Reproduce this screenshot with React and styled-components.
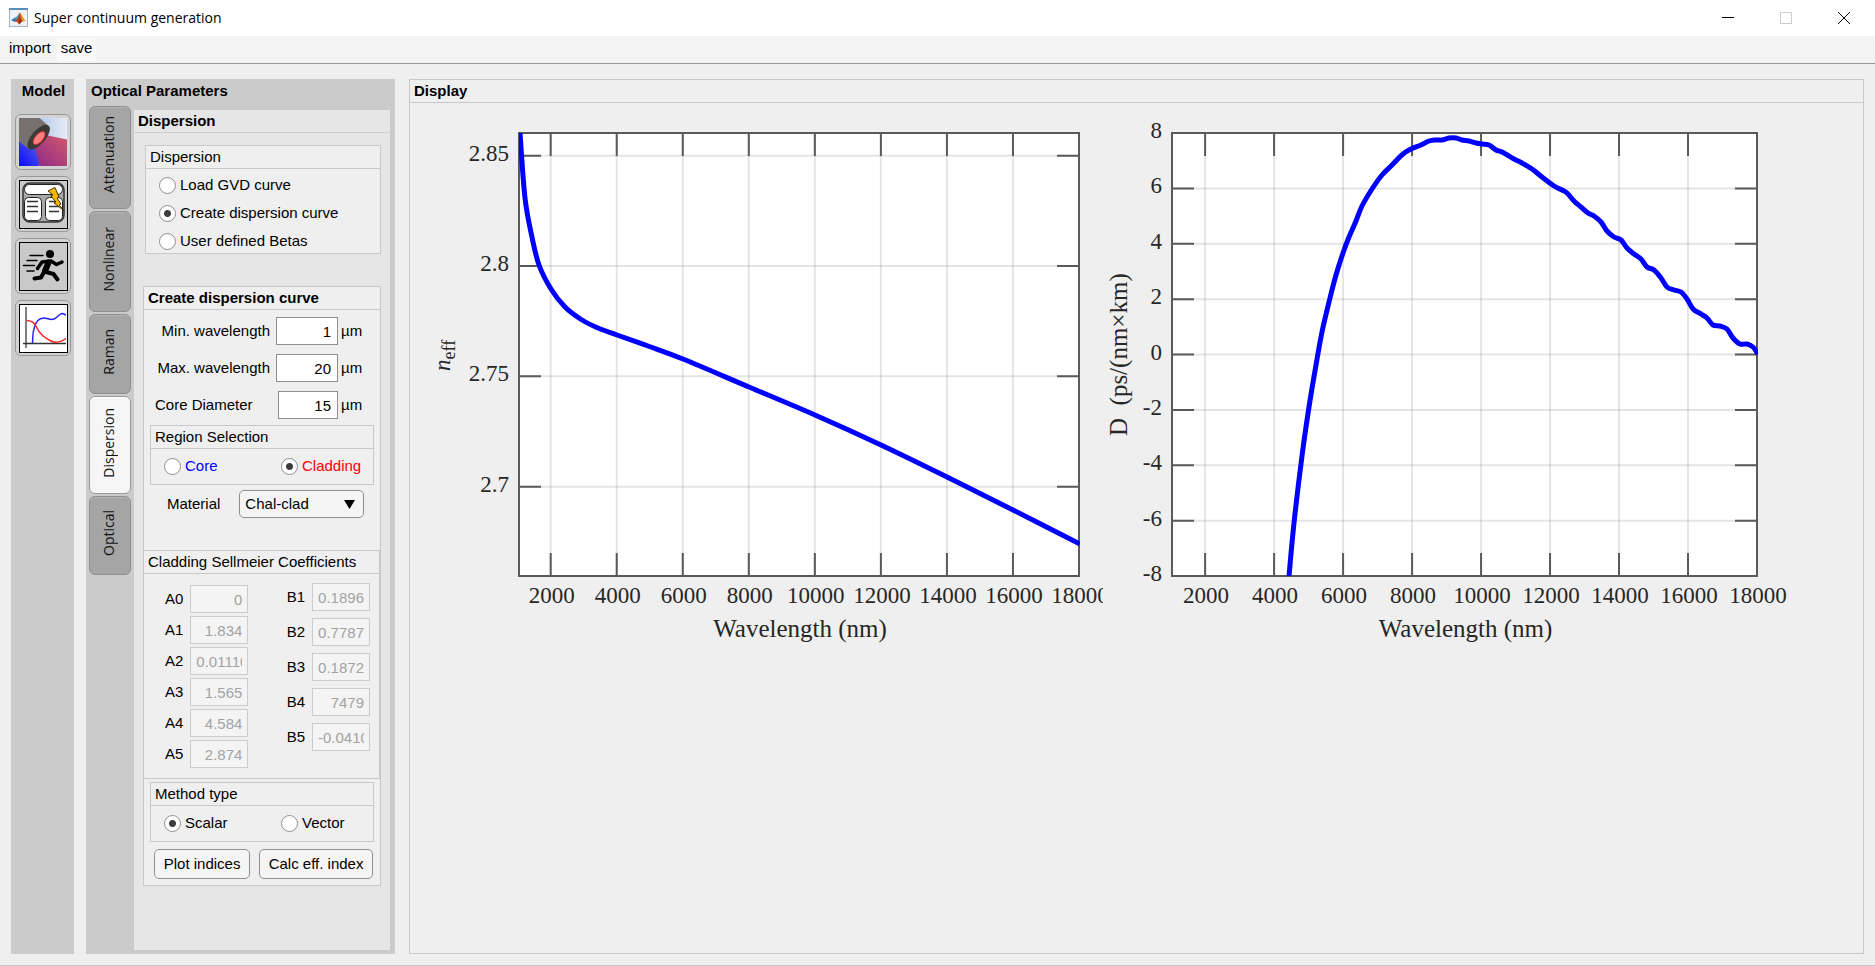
import { useState } from 'react';
import styled, { createGlobalStyle } from 'styled-components';

const GlobalStyle = createGlobalStyle`
    * {
        box-sizing: border-box;
    }
    body {
        margin: 0;
        background: #efefef;
        color: #000;
        font: 15px/20px "Liberation Sans", Arial, sans-serif;
    }
    button, input, select {
        font: inherit;
        color: inherit;
    }
`
const Window = styled.div`
    display: flex;
    flex-direction: column;
    min-height: 100vh;
    border-bottom: 1px solid #c8c8c8;
`
const TitleBar = styled.header`
    display: flex;
    align-items: center;
    height: 36px;
    padding: 0 2px 0 9px;
    background: #fff;
`
const WindowTitle = styled.h1`
    flex: 1;
    margin: 0 0 0 5px;
    font: 14px/20px "Open Sans", "Noto Sans", sans-serif;
`
const WindowButton = styled.button`
    display: grid;
    place-items: center;
    width: 58px;
    height: 34px;
    padding: 0;
    border: none;
    background: none;
`
const MenuBar = styled.nav`
    display: flex;
    gap: 2px;
    height: 28px;
    padding: 2px 5px;
    background: #f3f3f3;
    border-bottom: 1px solid #999;
`
const MenuItem = styled.button`
    height: 23px;
    padding: 0 4px 3px;
    border: none;
    background: ${(props) => props.$hover ? '#fafafa' : 'none'};
`
const Workspace = styled.main`
    display: flex;
    flex: 1;
    padding: 15px 11px 11px;
`
const SidePanel = styled.section`
    display: flex;
    flex-direction: column;
    flex: none;
    margin-right: ${(props) => props.$gap};
    background: #cbcbcb;
`
const PanelTitle = styled.h2`
    margin: 0;
    padding: ${(props) => props.$center ? '2px 3px 2px 5px' : '2px 5px'};
    font-size: 15px;
    line-height: 20px;
    text-align: ${(props) => props.$center ? 'center' : 'left'};
`
const ToolList = styled.div`
    display: flex;
    flex-direction: column;
    gap: 6px;
    padding: 11px 3px 11px 4px;
`
const ToolButton = styled.button`
    display: grid;
    place-items: center;
    width: 56px;
    height: 56px;
    padding: 0;
    border: 1px solid #979797;
    border-radius: 6px;
    background: #d3d3d3;
    svg {
        display: block;
    }
`
const OpticalBody = styled.div`
    display: flex;
    flex: 1;
    padding: 3px 5px 4px 3px;
`
const TabList = styled.div`
    display: flex;
    flex-direction: column;
    gap: 2px;
    width: 42px;
    margin-right: 3px;
`
const Tab = styled.button`
    height: ${(props) => props.$size};
    padding: 0 2px 0 0;
    border: 1px solid ${(props) => props.$active ? '#999' : '#8f8f8f'};
    border-radius: 6px;
    background: ${(props) => props.$active ? '#f6f6f6' : '#a5a5a5'};
    box-shadow: inset 0 1px 0 ${(props) => props.$active ? '#fff' : '#b4b4b4'};
    color: #111;
    font: 14px/20px "Open Sans", "Noto Sans", sans-serif;
`
const TabText = styled.span`
    display: inline-block;
    writing-mode: vertical-rl;
    transform: rotate(180deg);
`
const Page = styled.div`
    width: 256px;
    margin-top: 4px;
    background: #e6e6e6;
`
const PageTitle = styled.h3`
    margin: 0 0 12px;
    padding: 1px 4px;
    border-bottom: 1px solid #ccc;
    font-size: 15px;
    line-height: 20px;
`
const Group = styled.fieldset`
    min-width: 0;
    margin: ${(props) => props.$margin || '0'};
    padding: 0;
    border: 1px solid #c8c8c8;
    background: #efefef;
`
const GroupTitle = styled.div`
    padding: 1px 4px;
    border-bottom: 1px solid #c8c8c8;
    font-weight: ${(props) => props.$bold ? 'bold' : 'normal'};
`
const RadioColumn = styled.div`
    display: flex;
    flex-direction: column;
    gap: 8px;
    padding: 6px 13px 2px;
`
const RadioRow = styled.div`
    display: grid;
    grid-template-columns: 117px 1fr;
    padding: 7px 13px 8px;
`
const RadioLabel = styled.label`
    display: flex;
    align-items: center;
    gap: 4px;
    color: ${(props) => props.$color || '#000'};
`
const Radio = styled.input`
    appearance: none;
    flex: none;
    width: 17px;
    height: 17px;
    margin: 0;
    border: 1px solid #8f8f8f;
    border-radius: 50%;
    background: #fff;
    &:checked {
        background: radial-gradient(circle, #3c3c3c 3px, #fff 4px);
    }
`
const Fields = styled.div`
    display: grid;
    grid-template-columns: 126px 62px 1fr;
    align-items: center;
    gap: 9px 6px;
    padding: 7px 0 6px;
`
const FieldLabel = styled.label`
    padding-left: ${(props) => props.$left ? '11px' : '0'};
    text-align: ${(props) => props.$left ? 'left' : 'right'};
    white-space: nowrap;
`
const NumberField = styled.input`
    width: ${(props) => props.$width || '62px'};
    height: 28px;
    padding: 0 6px;
    justify-self: end;
    border: 1px solid #8f8f8f;
    border-radius: 0;
    background: #fff;
    text-align: right;
    &:disabled {
        padding: 0 5px;
        border-color: #ccc;
        background: #f4f4f4;
        color: #a3a3a3;
    }
`
const Unit = styled.span`
    margin-left: -3px;
`
const MaterialRow = styled.div`
    display: flex;
    align-items: center;
    gap: 19px;
    padding: 5px 0 32px 23px;
`
const SelectBox = styled.div`
    display: grid;
    align-items: center;
    width: 125px;
    select, svg {
        grid-area: 1 / 1;
    }
    svg {
        justify-self: end;
        margin-right: 9px;
        pointer-events: none;
    }
`
const Select = styled.select`
    appearance: none;
    height: 28px;
    padding: 0 5px;
    border: 1px solid #8f8f8f;
    border-radius: 5px;
    background: #f5f5f5;
`
const Coefficients = styled.div`
    display: flex;
    justify-content: space-between;
    padding: 9px 9px 10px 21px;
`
const CoefColumn = styled.div`
    display: flex;
    flex-direction: column;
    gap: ${(props) => props.$gap};
    padding-top: ${(props) => props.$top || '0'};
`
const CoefRow = styled.div`
    display: flex;
    align-items: center;
    gap: 7px;
`
const ButtonRow = styled.div`
    display: flex;
    gap: 9px;
    padding: 7px 7px 6px 10px;
`
const PushButton = styled.button`
    flex: ${(props) => props.$grow} 0 0;
    height: 30px;
    padding: 0;
    border: 1px solid #8f8f8f;
    border-radius: 5px;
    background: #f5f5f5;
    white-space: nowrap;
`
const DisplayPanel = styled.section`
    flex: 1;
    min-width: 0;
    border: 1px solid #c8c8c8;
`
const DisplayTitle = styled.h2`
    margin: 0;
    padding: 1px 4px;
    border-bottom: 1px solid #c8c8c8;
    font-size: 15px;
    line-height: 20px;
`
const Charts = styled.div`
    display: flex;
    align-items: flex-start;
`
const Plot = styled.svg`
    flex: ${(props) => props.$grow} 1 0;
    min-width: 0;
    height: auto;
    overflow: hidden;
    fill: #262626;
    font: 23px "Liberation Serif", "Times New Roman", serif;
`

const MatlabIcon = () => (
    <svg width="20" height="20" viewBox="0 0 20 20">
        <rect x="0.5" y="0.5" width="18" height="18" fill="#eef2f5" stroke="#a9b4bd" />
        <rect width="19" height="2" fill="#5b8fb8" />
        <path d="M2 12 6 9.5 8.5 12 5.5 14z" fill="#3a78b5" />
        <path d="M6 9.5C8 9 9.5 6 11 4.5L9 12 8 12.500z" fill="#44a5c0" />
        <path d="M11 4.5C9.5 8 9 11 6 13.5 8 13 9 15 10 16.5 12 15 13 13 14.5 13z" fill="#c0401c" />
        <path d="M11 4.5C13 6 14 11 17.5 14 16 13 14.5 12.5 13 14 11.5 11 11.5 8 11 4.500z" fill="#f08a24" />
        <path d="M10 16.5C12 15 12 13 13 14L11.5 9z" fill="#8c2412" />
    </svg>
)

const FiberIcon = () => (
    <svg width="48" height="48" viewBox="0 0 49 49">
        <defs>
            <linearGradient id="sky" x1="0" y1="0" x2="1" y2="0">
                <stop offset="0" stopColor="#8fb0e4" />
                <stop offset="1" stopColor="#e6ebf5" />
            </linearGradient>
            <linearGradient id="beam" x1="0" y1="1" x2="1" y2="0">
                <stop offset="0" stopColor="#8d2a88" />
                <stop offset="1" stopColor="#d4586c" />
            </linearGradient>
            <linearGradient id="blue" x1="0" y1="1" x2="1" y2="0">
                <stop offset="0" stopColor="#0a0aff" />
                <stop offset="1" stopColor="#5a68dc" />
            </linearGradient>
        </defs>
        <rect width="49" height="49" fill="url(#sky)" />
        <path d="M0 22 18 26 21 49H0z" fill="url(#blue)" />
        <path d="M26 17 49 22V49H21L16 29z" fill="url(#beam)" />
        <path d="M0 0H21L31 9 10 32 0 24z" fill="#76716f" />
        <ellipse cx="20" cy="19.5" rx="15.5" ry="7" transform="rotate(-49 20 19.5)" fill="#3c3a39" />
        <ellipse cx="20.5" cy="20.5" rx="8" ry="4" transform="rotate(-49 20.5 20.5)" fill="#ff8080" stroke="#d83030" />
    </svg>
)

const SetupIcon = () => (
    <svg width="49" height="49" viewBox="0 0 49 49">
        <rect x="0.5" y="0.5" width="48" height="48" fill="#c9c9c9" stroke="#000" />
        <rect x="4" y="3" width="41" height="39" rx="7" fill="#a9a9a9" stroke="#333" strokeWidth="1.5" />
        <rect x="5.5" y="4.5" width="38" height="10" rx="5" fill="#fff" stroke="#222" />
        <rect x="5.5" y="17.5" width="17" height="23" rx="4" fill="#fff" stroke="#222" />
        <rect x="26.5" y="17.5" width="17" height="23" rx="4" fill="#fff" stroke="#222" />
        <path d="M8 21.5H19M8 26.5H19M8 31.5H19M30 21.5H40M30 26.5H40M30 31.5H40" stroke="#333" strokeWidth="1.5" />
        <path d="M29 11 36 7.5 40 17 38 18 42 24 40 25 45.5 31 35 23 37 22 32 16 34 15z" fill="#f9b800" stroke="#443300" />
    </svg>
)

const RunIcon = () => (
    <svg width="49" height="49" viewBox="0 0 49 49">
        <rect x="0.5" y="0.5" width="48" height="48" fill="#c9c9c9" stroke="#000" />
        <circle cx="31" cy="12" r="4" fill="#000" />
        <g fill="none" stroke="#000" strokeLinecap="round" strokeLinejoin="round">
            <path d="M43 20 37.5 22.5 32 19 23 20 18.5 26.5" strokeWidth="3.5" />
            <path d="M29.500 20.5 26 29" strokeWidth="6" />
            <path d="M27 30 34.5 32 38.500 37.5" strokeWidth="4" />
            <path d="M25 30 22 35.5 15.5 36.5" strokeWidth="4" />
            <path d="M11 13.5H24M8 18.5H18M4.5 23.5H15.5M8 29H15" strokeWidth="1.5" />
        </g>
    </svg>
)

const CurvesIcon = () => (
    <svg width="49" height="49" viewBox="0 0 49 49">
        <rect x="0.5" y="0.5" width="48" height="48" fill="#fff" stroke="#000" />
        <g fill="none" strokeWidth="1.5">
            <path d="M7 3V44" stroke="#555" />
            <path d="M4 39.5H47" stroke="#333" />
            <path d="M13.5 39C14 32 13.5 29 15 25 16 20 18 14 25 14 29 14 31 16.5 35 15 38 14 40 10 43 9.5 45 9.5 46 11 47 11" stroke="#22f" />
            <path d="M8 16.5C13 17 15 18 18 24 21 31 26 34 32 37 36 39 42 38 47 34.5" stroke="#f22" />
        </g>
    </svg>
)

const PLOT_HEIGHT = 443

// Points are measured from the top left corner of the plot area.
const neffCurve = [
    [1, 0], [6, 65], [13, 104], [20, 132], [32, 156], [46, 174], [63, 187], [79, 195], [98, 202],
    [129, 213], [164, 226], [230, 254], [296, 282], [362, 312], [428, 344], [494, 377], [561, 411],
]
const dispersionCurve = [
    [117, 443], [122, 390], [130, 323], [137, 274], [144, 232], [150, 199], [158, 165], [164, 142],
    [171, 120], [177, 104], [184, 88], [190, 73], [200, 56], [210, 42], [220, 32], [231, 21], [239, 16],
    [249, 12], [257, 8], [264, 7], [270, 7], [277, 5], [284, 5], [290, 7], [297, 8], [304, 10], [310, 11],
    [317, 12], [324, 17], [330, 19], [342, 26], [350, 30], [360, 36], [370, 44], [382, 53], [390, 57],
    [395, 60], [402, 68], [409, 74], [416, 80], [422, 83], [429, 89], [435, 98], [442, 104], [449, 107],
    [455, 115], [462, 121], [469, 126], [475, 134], [482, 137], [489, 145], [495, 154], [502, 157],
    [509, 159], [515, 166], [521, 176], [529, 181], [535, 185], [541, 192], [548, 193], [555, 196],
    [561, 205], [568, 211], [575, 211], [581, 214], [586, 221],
]

// Catmull-Rom spline through the points
const toPath = (points) => points.reduce((d, [x, y], i) => {
    if (i === 0) return `M${x} ${y}`
    const [px, py] = points[i - 1]
    const [ax, ay] = points[i - 2] || points[i - 1]
    const [bx, by] = points[i + 1] || points[i]
    return `${d}C${px + (x - ax) / 6} ${py + (y - ay) / 6} ${x - (bx - px) / 6} ${y - (by - py) / 6} ${x} ${y}`
}, '')

const xTicks = [2000, 4000, 6000, 8000, 10000, 12000, 14000, 16000, 18000]

const Chart = ({ width, left, plotWidth, yMin, yMax, yTicks, points, clipId, label, children }) => {
    const xPos = (v) => ((v - 1040) / (18000 - 1040)) * plotWidth
    const yPos = (v) => ((yMax - v) / (yMax - yMin)) * PLOT_HEIGHT
    const inner = yTicks.filter((v) => v > yMin && v < yMax)
    return (
        <Plot $grow={width} viewBox={`0 0 ${width} 560`} role="img" aria-label={label}>
            <clipPath id={clipId}>
                <rect width={plotWidth + 1} height={PLOT_HEIGHT} />
            </clipPath>
            {children}
            <g transform={`translate(${left} 30)`}>
                <rect width={plotWidth} height={PLOT_HEIGHT} fill="#fff" />
                <g stroke="#262626" strokeOpacity="0.12" strokeWidth="2">
                    {xTicks.map((v) => <line key={v} x1={xPos(v)} x2={xPos(v)} y1="0" y2={PLOT_HEIGHT} />)}
                    {inner.map((v) => <line key={v} x1="0" x2={plotWidth} y1={yPos(v)} y2={yPos(v)} />)}
                </g>
                <g stroke="#5a5a5a" strokeWidth="2" fill="none">
                    <rect width={plotWidth} height={PLOT_HEIGHT} />
                    {xTicks.map((v) => (
                        <path key={v} d={`M${xPos(v)} 0v23M${xPos(v)} ${PLOT_HEIGHT}v-23`} />
                    ))}
                    {inner.map((v) => (
                        <path key={v} d={`M0 ${yPos(v)}h22M${plotWidth} ${yPos(v)}h-22`} />
                    ))}
                </g>
                <path d={toPath(points)} clipPath={`url(#${clipId})`} fill="none" stroke="#00f" strokeWidth="5" strokeLinejoin="round" />
                {xTicks.map((v) => (
                    <text key={v} x={xPos(v) + 1} y="470" textAnchor="middle">{v}</text>
                ))}
                {yTicks.map((v) => (
                    <text key={v} x="-10" y={yPos(v) + 5} textAnchor="end">{v}</text>
                ))}
                <text x={plotWidth / 2 + 1} y="504" textAnchor="middle" fontSize="25">Wavelength (nm)</text>
            </g>
        </Plot>
    )
}

const tools = [
    { name: 'Fiber', icon: <FiberIcon /> },
    { name: 'Setup', icon: <SetupIcon /> },
    { name: 'Run', icon: <RunIcon /> },
    { name: 'Results', icon: <CurvesIcon /> },
]
const tabs = [
    { name: 'Attenuation', size: '103px' },
    { name: 'Nonlinear', size: '101px' },
    { name: 'Raman', size: '80px' },
    { name: 'Dispersion', size: '98px' },
    { name: 'Optical', size: '79px' },
]
const aCoefs = [['A0', '0'], ['A1', '1.834'], ['A2', '0.01110'], ['A3', '1.565'], ['A4', '4.584'], ['A5', '2.874']]
const bCoefs = [['B1', '0.1896'], ['B2', '0.7787'], ['B3', '0.1872'], ['B4', '7479'], ['B5', '-0.0410']]

const Option = ({ group, label, color, checked }) => (
    <RadioLabel $color={color}>
        <Radio type="radio" name={group} defaultChecked={checked} />
        {label}
    </RadioLabel>
)

const Coef = ({ name, value }) => (
    <CoefRow>
        <label htmlFor={name}>{name}</label>
        <NumberField id={name} $width="58px" defaultValue={value} disabled />
    </CoefRow>
)

const App = () => {
    const [tab, setTab] = useState('Dispersion')
    return (
        <Window>
            <GlobalStyle />
            <TitleBar>
                <MatlabIcon />
                <WindowTitle>Super continuum generation</WindowTitle>
                <WindowButton aria-label="Minimize">
                    <svg width="12" height="12"><path d="M0 5.5H12" stroke="#000" /></svg>
                </WindowButton>
                <WindowButton aria-label="Maximize" disabled>
                    <svg width="12" height="12"><rect x="0.5" y="0.5" width="11" height="11" fill="none" stroke="#ccc" /></svg>
                </WindowButton>
                <WindowButton aria-label="Close">
                    <svg width="12" height="12"><path d="M0 0 12 12M12 0 0 12" stroke="#000" /></svg>
                </WindowButton>
            </TitleBar>
            <MenuBar>
                <MenuItem>import</MenuItem>
                <MenuItem $hover>save</MenuItem>
            </MenuBar>

            <Workspace>
                <SidePanel $gap="12px">
                    <PanelTitle $center>Model</PanelTitle>
                    <ToolList>
                        {tools.map((tool) => (
                            <ToolButton key={tool.name} aria-label={tool.name}>{tool.icon}</ToolButton>
                        ))}
                    </ToolList>
                </SidePanel>

                <SidePanel $gap="14px">
                    <PanelTitle>Optical Parameters</PanelTitle>
                    <OpticalBody>
                        <TabList role="tablist">
                            {tabs.map(({ name, size }) => (
                                <Tab key={name} role="tab" $size={size} $active={tab === name} aria-selected={tab === name} onClick={() => setTab(name)}>
                                    <TabText>{name}</TabText>
                                </Tab>
                            ))}
                        </TabList>
                        <Page>
                            <PageTitle>Dispersion</PageTitle>
                            <Group $margin="0 9px 32px 11px" aria-label="Dispersion">
                                <GroupTitle>Dispersion</GroupTitle>
                                <RadioColumn>
                                    <Option group="source" label="Load GVD curve" />
                                    <Option group="source" label="Create dispersion curve" checked />
                                    <Option group="source" label="User defined Betas" />
                                </RadioColumn>
                            </Group>

                            <Group $margin="0 9px" aria-label="Create dispersion curve">
                                <GroupTitle $bold>Create dispersion curve</GroupTitle>
                                <Fields>
                                    <FieldLabel htmlFor="min">Min. wavelength</FieldLabel>
                                    <NumberField id="min" defaultValue="1" />
                                    <Unit>µm</Unit>
                                    <FieldLabel htmlFor="max">Max. wavelength</FieldLabel>
                                    <NumberField id="max" defaultValue="20" />
                                    <Unit>µm</Unit>
                                    <FieldLabel htmlFor="core" $left>Core Diameter</FieldLabel>
                                    <NumberField id="core" $width="60px" defaultValue="15" />
                                    <Unit>µm</Unit>
                                </Fields>
                                <Group $margin="0 6px" aria-label="Region Selection">
                                    <GroupTitle>Region Selection</GroupTitle>
                                    <RadioRow>
                                        <Option group="region" label="Core" color="#00f" />
                                        <Option group="region" label="Cladding" color="#f00" checked />
                                    </RadioRow>
                                </Group>
                                <MaterialRow>
                                    <label htmlFor="material">Material</label>
                                    <SelectBox>
                                        <Select id="material"><option>Chal-clad</option></Select>
                                        <svg width="11" height="9"><path d="M0 0H11L5.5 9z" /></svg>
                                    </SelectBox>
                                </MaterialRow>
                                <Group $margin="0 0 3px -1px" aria-label="Cladding Sellmeier Coefficients">
                                    <GroupTitle>Cladding Sellmeier Coefficients</GroupTitle>
                                    <Coefficients>
                                        <CoefColumn $gap="3px" $top="2px">
                                            {aCoefs.map(([name, value]) => <Coef key={name} name={name} value={value} />)}
                                        </CoefColumn>
                                        <CoefColumn $gap="7px">
                                            {bCoefs.map(([name, value]) => <Coef key={name} name={name} value={value} />)}
                                        </CoefColumn>
                                    </Coefficients>
                                </Group>
                                <Group $margin="0 6px" aria-label="Method type">
                                    <GroupTitle>Method type</GroupTitle>
                                    <RadioRow>
                                        <Option group="method" label="Scalar" checked />
                                        <Option group="method" label="Vector" />
                                    </RadioRow>
                                </Group>
                                <ButtonRow>
                                    <PushButton $grow={96}>Plot indices</PushButton>
                                    <PushButton $grow={114}>Calc eff. index</PushButton>
                                </ButtonRow>
                            </Group>
                        </Page>
                    </OpticalBody>
                </SidePanel>

                <DisplayPanel>
                    <DisplayTitle>Display</DisplayTitle>
                    <Charts>
                        <Chart
                            width={693}
                            left={109}
                            plotWidth={560}
                            yMin={2.6595}
                            yMax={2.8603}
                            yTicks={[2.85, 2.8, 2.75, 2.7]}
                            points={neffCurve}
                            clipId="neff"
                            label="Effective index against wavelength"
                        >
                            <text transform="translate(40 268) rotate(-90)" fontSize="23">
                                <tspan fontStyle="italic">n</tspan>
                                <tspan dy="5" fontSize="18">eff</tspan>
                            </text>
                        </Chart>
                        <Chart
                            width={760}
                            left={69}
                            plotWidth={585}
                            yMin={-8}
                            yMax={8}
                            yTicks={[8, 6, 4, 2, 0, -2, -4, -6, -8]}
                            points={dispersionCurve}
                            clipId="disp"
                            label="Dispersion against wavelength"
                        >
                            <text transform="translate(24 333) rotate(-90)" fontSize="25">D{'\u00a0 '}(ps/(nm×km)</text>
                        </Chart>
                    </Charts>
                </DisplayPanel>
            </Workspace>
        </Window>
    )
}

export default App;
